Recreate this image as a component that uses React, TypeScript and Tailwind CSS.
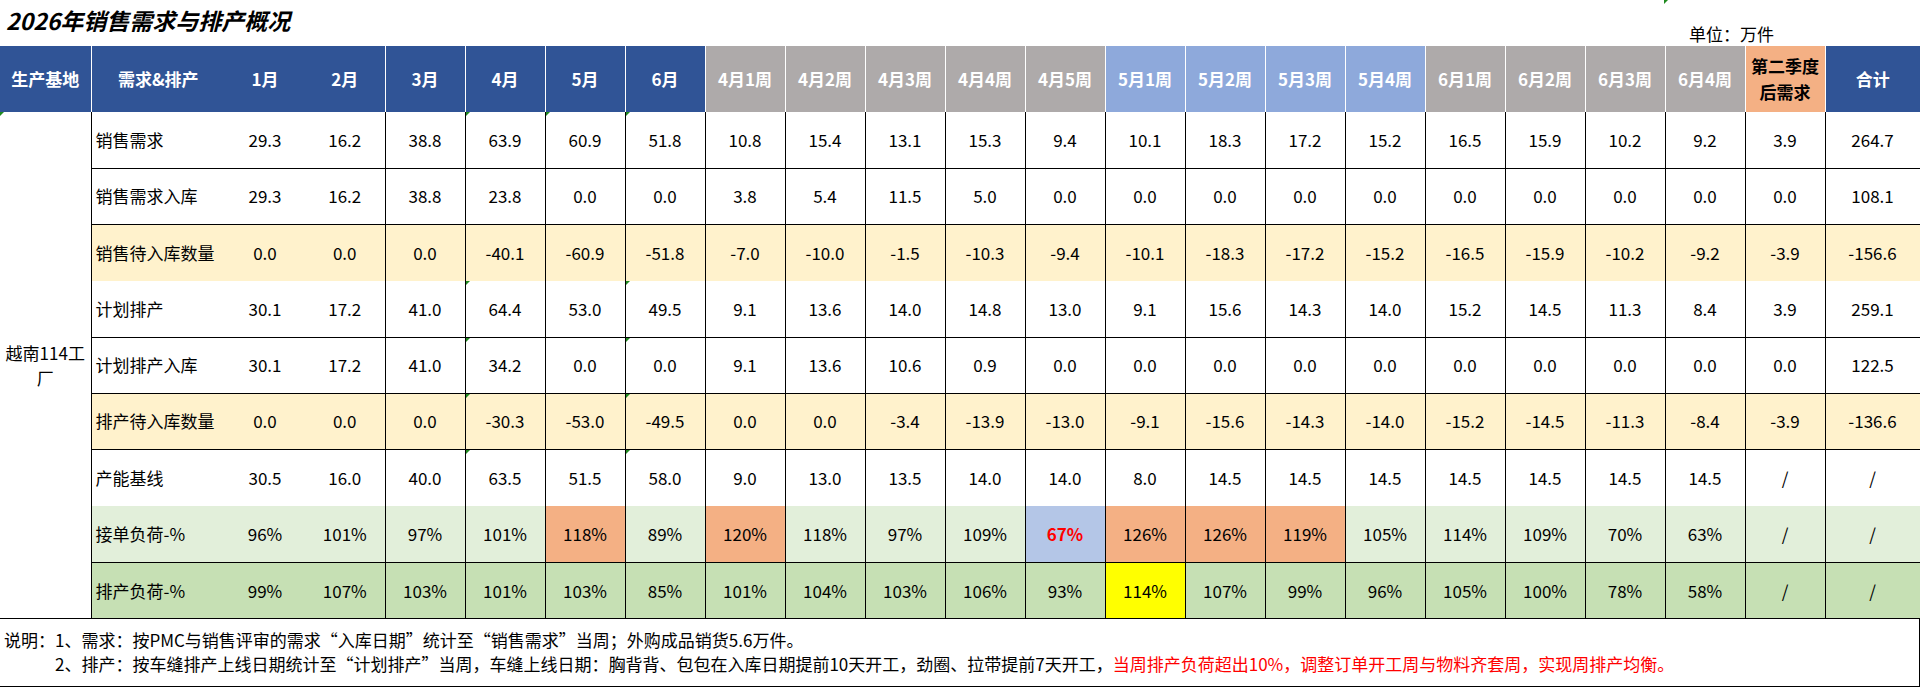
import React from "react";

type Head = { label: React.ReactNode; tone: "blue" | "gray" | "sky" | "orange" };

const heads: Head[] = [
  { label: "1月", tone: "blue" },
  { label: "2月", tone: "blue" },
  { label: "3月", tone: "blue" },
  { label: "4月", tone: "blue" },
  { label: "5月", tone: "blue" },
  { label: "6月", tone: "blue" },
  { label: "4月1周", tone: "gray" },
  { label: "4月2周", tone: "gray" },
  { label: "4月3周", tone: "gray" },
  { label: "4月4周", tone: "gray" },
  { label: "4月5周", tone: "gray" },
  { label: "5月1周", tone: "sky" },
  { label: "5月2周", tone: "sky" },
  { label: "5月3周", tone: "sky" },
  { label: "5月4周", tone: "sky" },
  { label: "6月1周", tone: "gray" },
  { label: "6月2周", tone: "gray" },
  { label: "6月3周", tone: "gray" },
  { label: "6月4周", tone: "gray" },
  {
    label: (
      <>
        第二季度
        <br />
        后需求
      </>
    ),
    tone: "orange",
  },
  { label: "合计", tone: "blue" },
];

const toneClass = {
  blue: "bg-[#305496] text-white",
  gray: "bg-[#AEAAAA] text-white",
  sky: "bg-[#8EA9DB] text-white",
  orange: "bg-[#F4B084] text-black",
};

type Row = {
  label: string;
  bg: string;
  top: boolean;
  h: string;
  vals: string[];
};

const rows: Row[] = [
  {
    label: "销售需求",
    bg: "bg-white",
    top: false,
    h: "h-[56px]",
    vals: ["29.3", "16.2", "38.8", "63.9", "60.9", "51.8", "10.8", "15.4", "13.1", "15.3", "9.4", "10.1", "18.3", "17.2", "15.2", "16.5", "15.9", "10.2", "9.2", "3.9", "264.7"],
  },
  {
    label: "销售需求入库",
    bg: "bg-white",
    top: true,
    h: "h-[56px]",
    vals: ["29.3", "16.2", "38.8", "23.8", "0.0", "0.0", "3.8", "5.4", "11.5", "5.0", "0.0", "0.0", "0.0", "0.0", "0.0", "0.0", "0.0", "0.0", "0.0", "0.0", "108.1"],
  },
  {
    label: "销售待入库数量",
    bg: "bg-[#FFF2CC]",
    top: true,
    h: "h-[57px]",
    vals: ["0.0", "0.0", "0.0", "-40.1", "-60.9", "-51.8", "-7.0", "-10.0", "-1.5", "-10.3", "-9.4", "-10.1", "-18.3", "-17.2", "-15.2", "-16.5", "-15.9", "-10.2", "-9.2", "-3.9", "-156.6"],
  },
  {
    label: "计划排产",
    bg: "bg-white",
    top: false,
    h: "h-[56px]",
    vals: ["30.1", "17.2", "41.0", "64.4", "53.0", "49.5", "9.1", "13.6", "14.0", "14.8", "13.0", "9.1", "15.6", "14.3", "14.0", "15.2", "14.5", "11.3", "8.4", "3.9", "259.1"],
  },
  {
    label: "计划排产入库",
    bg: "bg-white",
    top: true,
    h: "h-[56px]",
    vals: ["30.1", "17.2", "41.0", "34.2", "0.0", "0.0", "9.1", "13.6", "10.6", "0.9", "0.0", "0.0", "0.0", "0.0", "0.0", "0.0", "0.0", "0.0", "0.0", "0.0", "122.5"],
  },
  {
    label: "排产待入库数量",
    bg: "bg-[#FFF2CC]",
    top: true,
    h: "h-[56px]",
    vals: ["0.0", "0.0", "0.0", "-30.3", "-53.0", "-49.5", "0.0", "0.0", "-3.4", "-13.9", "-13.0", "-9.1", "-15.6", "-14.3", "-14.0", "-15.2", "-14.5", "-11.3", "-8.4", "-3.9", "-136.6"],
  },
  {
    label: "产能基线",
    bg: "bg-white",
    top: true,
    h: "h-[57px]",
    vals: ["30.5", "16.0", "40.0", "63.5", "51.5", "58.0", "9.0", "13.0", "13.5", "14.0", "14.0", "8.0", "14.5", "14.5", "14.5", "14.5", "14.5", "14.5", "14.5", "/", "/"],
  },
  {
    label: "接单负荷-%",
    bg: "bg-[#E2EFDA]",
    top: false,
    h: "h-[56px]",
    vals: ["96%", "101%", "97%", "101%", "118%", "89%", "120%", "118%", "97%", "109%", "67%", "126%", "126%", "119%", "105%", "114%", "109%", "70%", "63%", "/", "/"],
  },
  {
    label: "排产负荷-%",
    bg: "bg-[#C6E0B4]",
    top: true,
    h: "h-[56px]",
    vals: ["99%", "107%", "103%", "101%", "103%", "85%", "101%", "104%", "103%", "106%", "93%", "114%", "107%", "99%", "96%", "105%", "100%", "78%", "58%", "/", "/"],
  },
];

// highlighted cells: "row-col" -> classes
const marks: Record<string, string> = {
  "7-4": "bg-[#F4B084]",
  "7-6": "bg-[#F4B084]",
  "7-10": "bg-[#B4C6E7] text-[#FF0000] font-bold",
  "7-11": "bg-[#F4B084]",
  "7-12": "bg-[#F4B084]",
  "7-13": "bg-[#F4B084]",
  "8-11": "bg-[#FFFF00]",
};

// little green error triangles excel leaves in the corner
const flags = new Set(["0-3", "3-3", "4-3", "5-3", "6-3", "0-4", "0-5", "3-5", "4-5", "5-5", "6-5"]);

function Flag() {
  return (
    <span className="absolute left-0 top-0 h-0 w-0 border-t-[4px] border-r-[4px] border-t-[#1F8A1F] border-r-transparent" />
  );
}

export default function App() {
  const font = { fontFamily: "'Noto Sans CJK SC', 'Noto Sans', sans-serif" };
  return (
    <div className="w-[1920px] bg-white text-black" style={font}>
      <div className="relative flex h-[46px] items-start justify-between">
        <h1 className="pl-[6px] pt-[4px] text-[23px] font-bold italic leading-[32px]">
          2026年销售需求与排产概况
        </h1>
        <span className="mr-[146px] mt-[22px] text-[17px] leading-[24px]">单位：万件</span>
        <span className="absolute left-[1664px] top-0 h-0 w-0 border-t-[4px] border-r-[4px] border-t-[#1F8A1F] border-r-transparent" />
      </div>

      <table className="w-[1920px] table-fixed border-collapse">
        <colgroup>
          <col className="w-[91px]" />
          <col className="w-[134px]" />
          {heads.slice(0, 20).map((_, i) => (
            <col key={i} className="w-[80px]" />
          ))}
          <col className="w-[95px]" />
        </colgroup>
        <thead>
          <tr className="h-[66px]">
            <th className="bg-[#305496] p-0 text-[17px] font-bold text-white">生产基地</th>
            <th className="border-l border-white bg-[#305496] p-0 text-[17px] font-bold text-white">
              需求&amp;排产
            </th>
            {heads.map((h, i) => (
              <th
                key={i}
                className={`p-0 text-[17px] font-bold leading-[26px] ${toneClass[h.tone]} ${
                  i >= 2 ? "border-l border-white" : ""
                }`}
              >
                {h.label}
              </th>
            ))}
          </tr>
        </thead>
        <tbody>
          {rows.map((r, ri) => (
            <tr key={ri} className={`${r.h} ${r.bg}`}>
              {ri === 0 && (
                <td rowSpan={9} className="relative bg-white p-0 text-center text-[17px] leading-[25px]">
                  <Flag />
                  越南114工
                  <br />厂
                </td>
              )}
              <td
                className={`border-l border-black pl-[4px] text-left text-[17px] ${
                  r.top ? "border-t border-t-black" : ""
                }`}
              >
                {r.label}
              </td>
              {r.vals.map((v, ci) => (
                <td
                  key={ci}
                  className={`relative p-0 text-center text-[17px] ${marks[`${ri}-${ci}`] ?? ""} ${
                    ci >= 2 ? "border-l border-l-black" : ""
                  } ${ci === 20 ? "border-r border-r-black" : ""} ${r.top ? "border-t border-t-black" : ""}`}
                >
                  {flags.has(`${ri}-${ci}`) && <Flag />}
                  {v}
                </td>
              ))}
            </tr>
          ))}
        </tbody>
      </table>

      <div className="h-[69px] border-y border-r border-black pt-[9px] text-[17px] leading-[24px]">
        <div className="pl-[4px]">
          说明：1、需求：按PMC与销售评审的需求“入库日期”统计至“销售需求”当周；外购成品销货5.6万件。
        </div>
        <div className="pl-[55px]">
          2、排产：按车缝排产上线日期统计至“计划排产”当周，车缝上线日期：胸背背、包包在入库日期提前10天开工，劲圈、拉带提前7天开工，
          <span className="text-[#FF0000]">当周排产负荷超出10%，调整订单开工周与物料齐套周，实现周排产均衡。</span>
        </div>
      </div>
    </div>
  );
}
